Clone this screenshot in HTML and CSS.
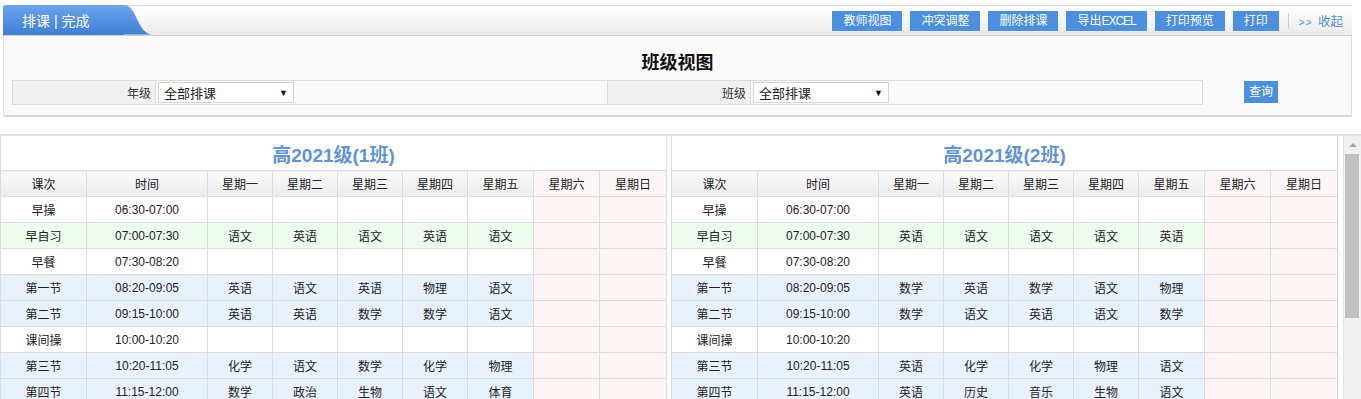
FILE: index.html
```html
<!DOCTYPE html>
<html lang="zh-CN">
<head>
    <meta charset="UTF-8">
    <title>排课 | 完成</title>
    <link rel="stylesheet" href="styles.css">
</head>
<body>

    <div class="topbar">
        <div class="tab">
            <span class="tab-text">排课 | 完成</span>
            <svg class="tab-curve" width="29" height="29" viewBox="0 0 29 29">
                <defs>
                    <linearGradient id="tabgrad" x1="0" y1="0" x2="0" y2="1">
                        <stop offset="0" stop-color="#6aa4eb"/>
                        <stop offset="1" stop-color="#3e7fd7"/>
                    </linearGradient>
                </defs>
                <path d="M0 0 L1 0 C13 0 13 29 29 29 L0 29 Z" fill="url(#tabgrad)"/>
            </svg>
        </div>
        <div class="actions">
            <button class="btn">教师视图</button>
            <button class="btn">冲突调整</button>
            <button class="btn">删除排课</button>
            <button class="btn">导出<span class="tight">EXCEL</span></button>
            <button class="btn">打印预览</button>
            <button class="btn">打印</button>
            <span class="sep"></span>
            <a class="collapse"><small>&gt;&gt;</small> 收起</a>
        </div>
    </div>

    <div class="panel">
        <h2 class="panel-title">班级视图</h2>
        <div class="filter">
            <table class="filter-table">
                <tr>
                    <td class="lbl">年级</td>
                    <td class="val"><div class="select"><span>全部排课</span><i>▼</i></div></td>
                    <td class="lbl">班级</td>
                    <td class="val"><div class="select"><span>全部排课</span><i>▼</i></div></td>
                </tr>
            </table>
            <button class="btn query">查询</button>
        </div>
    </div>

    <div class="scroller">
        <div class="grid">
            <table class="sched">
                <colgroup>
                    <col style="width:86px"><col style="width:121px"><col style="width:65px"><col style="width:65px"><col style="width:65px"><col style="width:65px"><col style="width:66px"><col style="width:66px"><col>
                </colgroup>
                <tr><th class="cap" colspan="9">高2021级(1班)</th></tr>
                <tr class="head"><th>课次</th><th>时间</th><th>星期一</th><th>星期二</th><th>星期三</th><th>星期四</th><th>星期五</th><th class="wk">星期六</th><th class="wk">星期日</th></tr>
                <tr><td>早操</td><td>06:30-07:00</td><td></td><td></td><td></td><td></td><td></td><td class="wk"></td><td class="wk"></td></tr>
                <tr class="green"><td>早自习</td><td>07:00-07:30</td><td>语文</td><td>英语</td><td>语文</td><td>英语</td><td>语文</td><td class="wk"></td><td class="wk"></td></tr>
                <tr><td>早餐</td><td>07:30-08:20</td><td></td><td></td><td></td><td></td><td></td><td class="wk"></td><td class="wk"></td></tr>
                <tr class="blue"><td>第一节</td><td>08:20-09:05</td><td>英语</td><td>语文</td><td>英语</td><td>物理</td><td>语文</td><td class="wk"></td><td class="wk"></td></tr>
                <tr class="blue"><td>第二节</td><td>09:15-10:00</td><td>英语</td><td>英语</td><td>数学</td><td>数学</td><td>语文</td><td class="wk"></td><td class="wk"></td></tr>
                <tr><td>课间操</td><td>10:00-10:20</td><td></td><td></td><td></td><td></td><td></td><td class="wk"></td><td class="wk"></td></tr>
                <tr class="blue"><td>第三节</td><td>10:20-11:05</td><td>化学</td><td>语文</td><td>数学</td><td>化学</td><td>物理</td><td class="wk"></td><td class="wk"></td></tr>
                <tr class="blue"><td>第四节</td><td>11:15-12:00</td><td>数学</td><td>政治</td><td>生物</td><td>语文</td><td>体育</td><td class="wk"></td><td class="wk"></td></tr>
            </table>

            <table class="sched">
                <colgroup>
                    <col style="width:86px"><col style="width:121px"><col style="width:65px"><col style="width:65px"><col style="width:65px"><col style="width:65px"><col style="width:66px"><col style="width:66px"><col>
                </colgroup>
                <tr><th class="cap" colspan="9">高2021级(2班)</th></tr>
                <tr class="head"><th>课次</th><th>时间</th><th>星期一</th><th>星期二</th><th>星期三</th><th>星期四</th><th>星期五</th><th class="wk">星期六</th><th class="wk">星期日</th></tr>
                <tr><td>早操</td><td>06:30-07:00</td><td></td><td></td><td></td><td></td><td></td><td class="wk"></td><td class="wk"></td></tr>
                <tr class="green"><td>早自习</td><td>07:00-07:30</td><td>英语</td><td>语文</td><td>语文</td><td>语文</td><td>英语</td><td class="wk"></td><td class="wk"></td></tr>
                <tr><td>早餐</td><td>07:30-08:20</td><td></td><td></td><td></td><td></td><td></td><td class="wk"></td><td class="wk"></td></tr>
                <tr class="blue"><td>第一节</td><td>08:20-09:05</td><td>数学</td><td>英语</td><td>数学</td><td>语文</td><td>物理</td><td class="wk"></td><td class="wk"></td></tr>
                <tr class="blue"><td>第二节</td><td>09:15-10:00</td><td>数学</td><td>语文</td><td>英语</td><td>语文</td><td>数学</td><td class="wk"></td><td class="wk"></td></tr>
                <tr><td>课间操</td><td>10:00-10:20</td><td></td><td></td><td></td><td></td><td></td><td class="wk"></td><td class="wk"></td></tr>
                <tr class="blue"><td>第三节</td><td>10:20-11:05</td><td>英语</td><td>化学</td><td>化学</td><td>物理</td><td>语文</td><td class="wk"></td><td class="wk"></td></tr>
                <tr class="blue"><td>第四节</td><td>11:15-12:00</td><td>英语</td><td>历史</td><td>音乐</td><td>生物</td><td>语文</td><td class="wk"></td><td class="wk"></td></tr>
            </table>
        </div>

        <div class="scrollbar">
            <div class="sb-arrow"></div>
            <div class="sb-thumb"></div>
        </div>
    </div>

</body>
</html>
```

FILE: styles.css
```css
html, body {
    height: 100%;
    overflow: hidden;
}

body {
    margin: 0;
    font-family: 'Liberation Sans', 'Noto Sans CJK SC', sans-serif;
    font-size: 12px;
    color: #333;
    background-color: #fff;
}

/* top bar */

.topbar {
    display: flex;
    align-items: center;
    justify-content: space-between;
    height: 29px;
    margin: 5px 9px 0 3px;
    border-top: 1px solid #dcdcdc;
    border-bottom: 1px solid #cfcfcf;
    background: linear-gradient(#ffffff, #ebebeb);
}

.tab {
    display: flex;
    align-self: stretch;
    margin-top: -1px;
}

.tab-text {
    display: flex;
    align-items: center;
    width: 102px;
    padding-left: 19px;
    color: #fff;
    font-size: 14px;
    background: linear-gradient(#6aa4eb, #3e7fd7);
    border-radius: 3px 0 0 0;
}

.tab-curve {
    display: block;
    height: 30px;
}

.actions {
    display: flex;
    align-items: center;
    padding-right: 9px;
}

.btn {
    height: 20px;
    padding: 0 11px;
    margin-left: 8px;
    border: none;
    background-color: #4a8fe0;
    color: #fff;
    font-family: 'Liberation Sans', 'Noto Sans CJK SC', sans-serif;
    font-size: 12px;
    line-height: 20px;
    cursor: pointer;
}

.btn:hover {
    background-color: #3a7bcc;
}

.btn .tight {
    letter-spacing: -1px;
}

.sep {
    width: 1px;
    height: 16px;
    margin: 0 10px 0 9px;
    background-color: #cfcfcf;
}

.collapse {
    color: #4a8fe0;
    font-size: 12.5px;
    cursor: pointer;
}

.collapse small {
    font-size: 10px;
    letter-spacing: 1px;
    margin-right: 2px;
}

/* filter panel */

.panel {
    margin: 0 9px 0 3px;
    padding: 10px 8px;
    background-color: #fafafa;
    border: 1px solid #e0e0e0;
    border-top: none;
    border-bottom: 2px solid #d6d6d6;
}

.panel-title {
    margin: 7px 0 7px;
    text-align: center;
    font-size: 18px;
    line-height: 20px;
    color: #111;
}

.filter {
    display: flex;
    align-items: center;
}

.filter-table {
    width: 1191px;
    border-collapse: collapse;
}

.filter-table td {
    height: 23px;
    padding: 0;
    border: 1px solid #dcdcdc;
}

.filter-table .lbl {
    width: 138px;
    padding-right: 4px;
    text-align: right;
    background-color: #f0f0f0;
}

.filter-table .val {
    background-color: #fafafa;
}

.select {
    display: flex;
    align-items: center;
    justify-content: space-between;
    width: 124px;
    height: 19px;
    margin-left: 2px;
    padding: 0 5px;
    background-color: #fff;
    border: 1px solid #d4d4d4;
    font-size: 13px;
    color: #222;
}

.select i {
    font-style: normal;
    font-size: 9px;
    color: #111;
}

.query {
    width: 34px;
    height: 22px;
    padding: 0;
    margin-left: 41px;
    margin-top: -2px;
}

/* schedule tables */

.scroller {
    display: flex;
    justify-content: space-between;
    height: 264px;
    margin-top: 17px;
    border-top: 2px solid #e0e0e0;
    overflow: hidden;
}

.grid {
    display: grid;
    grid-template-columns: 667px 667px;
    gap: 4px;
    align-items: start;
}

.scrollbar {
    width: 17px;
    flex-shrink: 0;
    background-color: #f0f0f0;
    border-left: 1px solid #e2e2e2;
}

.sb-arrow {
    height: 17px;
    display: flex;
    align-items: center;
    justify-content: center;
}

.sb-arrow::before {
    content: "";
    border-left: 4px solid transparent;
    border-right: 4px solid transparent;
    border-bottom: 4px solid #a3a3a3;
}

.sb-thumb {
    height: 164px;
    margin: 1px 2px 0 1px;
    background-color: #c1c1c1;
}

.sched {
    width: 667px;
    table-layout: fixed;
    border-collapse: collapse;
    border: 1px solid #dadada;
    border-top: none;
}

.sched th,
.sched td {
    height: 25px;
    padding: 0;
    border: 1px solid #dcdcdc;
    text-align: center;
    font-weight: normal;
    color: #222;
}

.sched th.cap {
    height: 34px;
    font-size: 19px;
    font-weight: bold;
    color: #5f93d9;
    background-color: #fff;
    border-top: none;
}

.sched .head th {
    background: linear-gradient(#fafafa, #ececec);
}

.sched .green td {
    background-color: #edfced;
}

.sched .blue td {
    background-color: #e8f2fe;
}

.sched .wk,
.sched .head th.wk,
.sched .green td.wk,
.sched .blue td.wk {
    background: #fdf5f5;
}
```
